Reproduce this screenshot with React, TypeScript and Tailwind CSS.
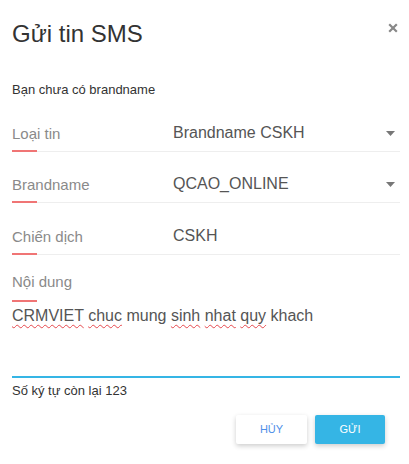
import React from "react";

function Arrow() {
  return (
    <svg width="9" height="5" viewBox="0 0 9 5" className="block">
      <path d="M0 0 L9 0 L4.5 5 Z" fill="#777" />
    </svg>
  );
}

function Row({
  label,
  value,
  dropdown,
  pt,
}: {
  label: string;
  value: string;
  dropdown?: boolean;
  pt: string;
}) {
  return (
    <div className={`flex items-end border-b border-[#eeeeee] ${pt}`}>
      <div className="flex w-[161px] flex-col">
        <div className="text-[15px] leading-[20px] text-[#8a8a8a]">{label}</div>
        <div className="relative top-[1px] mt-[5px] h-[2px] w-[25px] bg-[#f07575]" />
      </div>
      <div className="mb-[8px] flex flex-1 items-center">
        <div className="flex-1 text-[16px] leading-[20px] text-[#555]">{value}</div>
        {dropdown && (
          <div className="mr-[5px]">
            <Arrow />
          </div>
        )}
      </div>
    </div>
  );
}

function Wavy({ children }: { children: React.ReactNode }) {
  return (
    <span className="underline decoration-[#e5484d] decoration-wavy decoration-1 underline-offset-[3px]">
      {children}
    </span>
  );
}

export default function App() {
  return (
    <div className="h-[464px] w-[409px] bg-white pl-[12px] pr-[9px] pt-[20px] font-['Liberation_Sans',Arial,sans-serif]">
      <div className="flex items-start justify-between">
        <h1 className="text-[24px] leading-[28px] text-[#333]">Gửi tin SMS</h1>
        <svg width="10" height="10" viewBox="0 0 10 10" className="mr-[2px] mt-[3px]">
          <path d="M1.2 1.2 L8.8 8.8 M8.8 1.2 L1.2 8.8" stroke="#888" strokeWidth="2.2" />
        </svg>
      </div>

      <div className="mt-[34px] text-[13px] leading-[16px] text-[#333]">Bạn chưa có brandname</div>

      <div className="mt-[1px]">
        <Row label="Loại tin" value="Brandname CSKH" dropdown pt="pt-[24px]" />
        <Row label="Brandname" value="QCAO_ONLINE" dropdown pt="pt-[22px]" />
        <Row label="Chiến dịch" value="CSKH" pt="pt-[23px]" />
      </div>

      <div className="pt-[17px]">
        <div className="text-[15px] leading-[20px] text-[#8a8a8a]">Nội dung</div>
        <div className="mt-[8px] h-[2px] w-[25px] bg-[#f07575]" />
        <div className="h-[76px] border-b-2 border-[#35b5e5] pt-[4px] text-[16px] leading-[20px] text-[#555]">
          <Wavy>CRMVIET</Wavy> <Wavy>chuc</Wavy> mung <Wavy>sinh</Wavy> <Wavy>nhat</Wavy> <Wavy>quy</Wavy> khach
        </div>
      </div>

      <div className="mt-[5px] text-[13px] leading-[16px] text-[#333]">Số ký tự còn lại 123</div>

      <div className="mr-[15px] mt-[16px] flex justify-end gap-[8px]">
        <button className="flex h-[29px] w-[71px] items-center justify-center rounded-[2px] bg-white text-[11px] text-[#4f8fe8] shadow-[0_2px_5px_rgba(0,0,0,0.2)]">
          HỦY
        </button>
        <button className="flex h-[29px] w-[70px] items-center justify-center rounded-[2px] bg-[#35b5e5] text-[11px] text-white shadow-[0_2px_5px_rgba(0,0,0,0.2)]">
          GỬI
        </button>
      </div>
    </div>
  );
}
